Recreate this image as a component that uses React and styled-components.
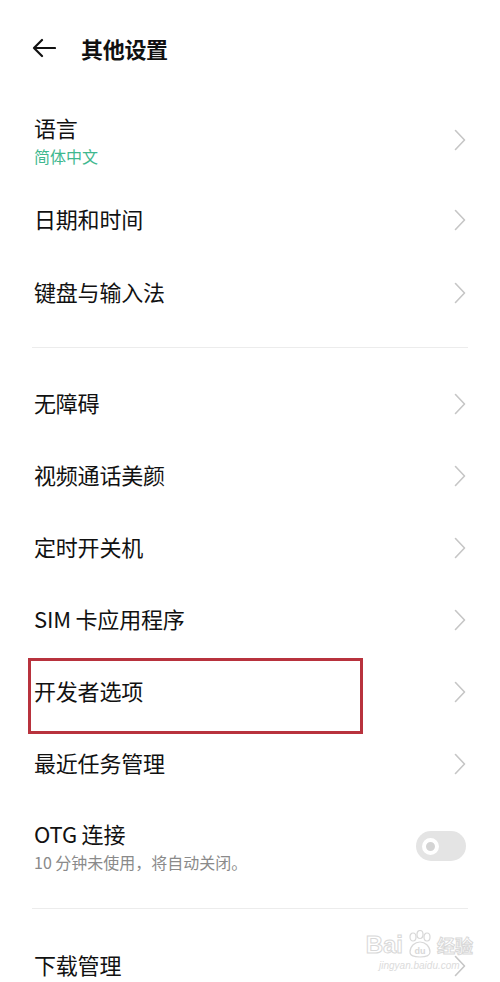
import React from 'react'
import styled, { createGlobalStyle } from 'styled-components'

const GlobalStyle = createGlobalStyle`
  body {
    margin: 0;
    background: #ffffff;
    font-family: "Noto Sans CJK SC", "Noto Sans", sans-serif;
    color: #111111;
  }
`;

const Page = styled.div`
  width: 500px;
  height: 982px;
  overflow: hidden;
  background: #ffffff;
`;

const Header = styled.div`
  height: 96px;
  display: flex;
  align-items: center;
  gap: 25px;
  padding: 0 32px;
  box-sizing: border-box;
`;

const Title = styled.div`
  font-size: 22px;
  font-weight: 700;
  line-height: 28px;
  letter-spacing: -0.3px;
`;

const Row = styled.div`
  position: relative;
  height: ${p => p.$h || 72}px;
  display: flex;
  align-items: center;
  justify-content: space-between;
  padding: 0 34px;
  box-sizing: border-box;
`;

const TextCol = styled.div`
  display: flex;
  flex-direction: column;
`;

const Label = styled.div`
  font-size: 22px;
  line-height: 28px;
  padding-bottom: 4px;
  color: #111111;
  letter-spacing: -0.2px;
`;

const Sub = styled.div`
  font-size: 16px;
  line-height: 22px;
  color: ${p => p.$green ? '#3fb88f' : '#8a8a8a'};
`;

const Divider = styled.div`
  height: 1px;
  background: #ececec;
  margin: ${p => p.$m || '18px 32px 20px'};
`;

const Toggle = styled.div`
  width: 50px;
  height: 30px;
  border-radius: 15px;
  background: #e4e4e4;
  display: flex;
  align-items: center;
  padding-left: 6px;
  box-sizing: border-box;
`;

const Knob = styled.div`
  width: 17px;
  height: 17px;
  border-radius: 50%;
  border: 4px solid #ffffff;
  box-sizing: border-box;
  background: #d4d4d4;
`;

const Highlight = styled.div`
  position: absolute;
  left: 28px;
  top: 2px;
  width: 335px;
  height: 76px;
  border: 3px solid #b8323d;
  box-sizing: border-box;
  pointer-events: none;
`;

const Watermark = styled.div`
  position: absolute;
  right: 27px;
  top: 0;
  display: flex;
  flex-direction: column;
  align-items: center;
  opacity: 0.85;
`;

const MarkTop = styled.div`
  font-family: "Liberation Sans", sans-serif;
  font-size: 24px;
  font-weight: 700;
  line-height: 30px;
  display: flex;
  align-items: center;
  gap: 2px;
  color: #ffffff;
  -webkit-text-stroke: 1px #d2d2d2;
`;

const MarkCn = styled.span`
  font-family: "Noto Sans CJK SC", sans-serif;
  font-size: 18px;
`;

const MarkUrl = styled.div`
  font-family: "Liberation Sans", sans-serif;
  font-size: 10px;
  font-style: italic;
  line-height: 12px;
  color: #d6d6d6;
`;

const Chevron = () => (
  <svg width="12" height="22" viewBox="0 0 12 22">
    <polyline points="1.5,1.5 10.5,11 1.5,20.5" fill="none" stroke="#c6c6c6" strokeWidth="1.6" strokeLinecap="round" strokeLinejoin="round" />
  </svg>
);

const BackArrow = () => (
  <svg width="24" height="20" viewBox="0 0 24 20">
    <path d="M23 10H2M10 2L2 10l8 8" fill="none" stroke="#111111" strokeWidth="2.2" strokeLinecap="round" strokeLinejoin="round" />
  </svg>
);

const Paw = () => (
  <svg width="30" height="30" viewBox="0 0 30 30">
    <g fill="#ffffff" stroke="#d2d2d2" strokeWidth="1.2">
      <ellipse cx="8" cy="7" rx="3" ry="4" />
      <ellipse cx="15" cy="4.5" rx="3" ry="4" />
      <ellipse cx="22" cy="7" rx="3" ry="4" />
      <path d="M5 22c0-6 5-10 10-10s10 4 10 10c0 4-4 5-10 5S5 26 5 22z" />
    </g>
    <text x="15" y="24" textAnchor="middle" fontSize="9" fontFamily="Liberation Sans, sans-serif" fill="#d2d2d2">du</text>
  </svg>
);

const Item = ({ label, sub, green, h, children }) => (
  <Row $h={h}>
    <TextCol>
      <Label>{label}</Label>
      {sub && <Sub $green={green}>{sub}</Sub>}
    </TextCol>
    <Chevron />
    {children}
  </Row>
);

export default function App() {
  return (
    <Page>
      <GlobalStyle />
      <Header>
        <BackArrow />
        <Title>其他设置</Title>
      </Header>

      <Item label="语言" sub="简体中文" green h={88} />
      <Item label="日期和时间" />
      <Item label="键盘与输入法" h={73} />

      <Divider />

      <Item label="无障碍" />
      <Item label="视频通话美颜" />
      <Item label="定时开关机" />
      <Item label="SIM 卡应用程序" />
      <Item label="开发者选项">
        <Highlight />
      </Item>
      <Item label="最近任务管理" />

      <Row $h={92}>
        <TextCol>
          <Label>OTG 连接</Label>
          <Sub>10 分钟未使用，将自动关闭。</Sub>
        </TextCol>
        <Toggle>
          <Knob />
        </Toggle>
      </Row>

      <Divider $m="16px 32px 21px" />

      <Item label="下载管理">
        <Watermark>
          <MarkTop>
            Bai<Paw /><MarkCn>经验</MarkCn>
          </MarkTop>
          <MarkUrl>jingyan.baidu.com</MarkUrl>
        </Watermark>
      </Item>
    </Page>
  );
}
